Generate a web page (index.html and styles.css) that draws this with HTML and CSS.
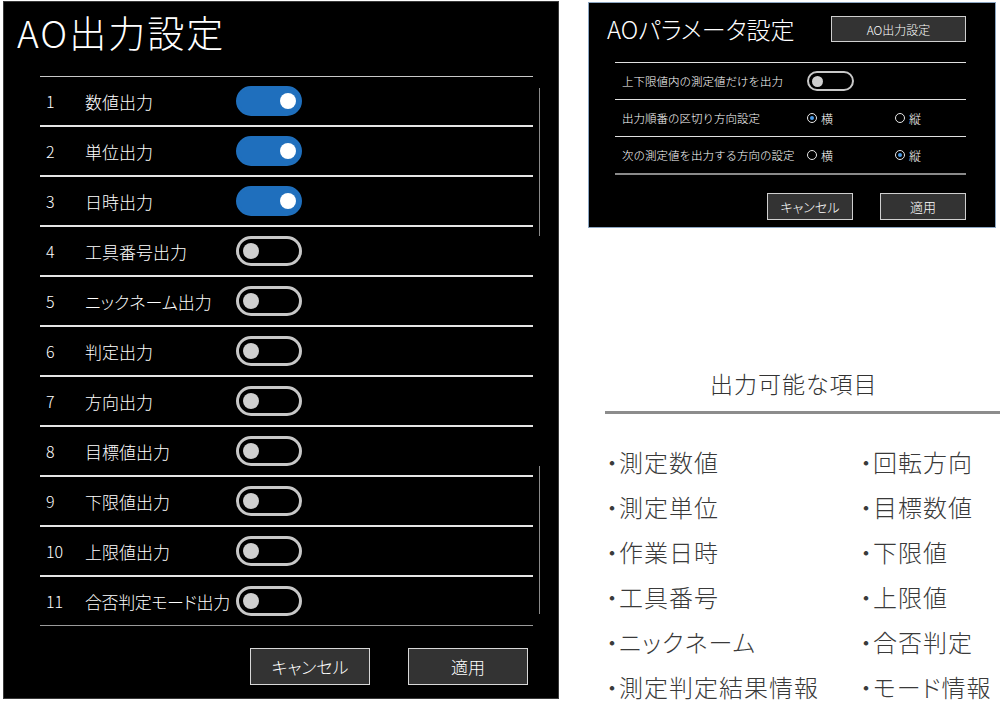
FILE: index.html
```html
<!DOCTYPE html>
<html lang="ja">
<head>
<meta charset="utf-8">
<title>AO出力設定</title>
<link rel="stylesheet" href="styles.css">
</head>
<body>
<div class="page">
  <section class="panel-main">
    <h1 class="main-title">AO出力設定</h1>
    <div class="list-wrap">
      <ul class="out-list">
        <li class="row"><span class="num">1</span><span class="label">数値出力</span><span class="toggle on"><span class="knob"></span></span></li>
        <li class="row"><span class="num">2</span><span class="label">単位出力</span><span class="toggle on"><span class="knob"></span></span></li>
        <li class="row"><span class="num">3</span><span class="label">日時出力</span><span class="toggle on"><span class="knob"></span></span></li>
        <li class="row"><span class="num">4</span><span class="label">工具番号出力</span><span class="toggle"><span class="knob"></span></span></li>
        <li class="row"><span class="num">5</span><span class="label">ニックネーム出力</span><span class="toggle"><span class="knob"></span></span></li>
        <li class="row"><span class="num">6</span><span class="label">判定出力</span><span class="toggle"><span class="knob"></span></span></li>
        <li class="row"><span class="num">7</span><span class="label">方向出力</span><span class="toggle"><span class="knob"></span></span></li>
        <li class="row"><span class="num">8</span><span class="label">目標値出力</span><span class="toggle"><span class="knob"></span></span></li>
        <li class="row"><span class="num">9</span><span class="label">下限値出力</span><span class="toggle"><span class="knob"></span></span></li>
        <li class="row"><span class="num">10</span><span class="label">上限値出力</span><span class="toggle"><span class="knob"></span></span></li>
        <li class="row"><span class="num">11</span><span class="label tight">合否判定モード出力</span><span class="toggle"><span class="knob"></span></span></li>
      </ul>
      <div class="scrollbar"><span class="seg"></span><span class="seg"></span></div>
    </div>
    <div class="actions">
      <button class="btn">キャンセル</button>
      <button class="btn">適用</button>
    </div>
  </section>

  <aside class="side">
    <section class="panel-param">
      <div class="param-head">
        <h2 class="param-title">AOパラメータ設定</h2>
        <button class="head-btn">AO出力設定</button>
      </div>
      <ul class="param-rows">
        <li class="prow"><span class="plabel">上下限値内の測定値だけを出力</span><span class="toggle small"><span class="knob"></span></span></li>
        <li class="prow"><span class="plabel">出力順番の区切り方向設定</span><span class="opt"><span class="radio on"></span>横</span><span class="opt"><span class="radio"></span>縦</span></li>
        <li class="prow"><span class="plabel">次の測定値を出力する方向の設定</span><span class="opt"><span class="radio"></span>横</span><span class="opt"><span class="radio on"></span>縦</span></li>
      </ul>
      <div class="param-actions">
        <button class="pbtn">キャンセル</button>
        <button class="pbtn">適用</button>
      </div>
    </section>

    <h2 class="avail-title">出力可能な項目</h2>
    <div class="avail-rule"></div>
    <ul class="avail-list">
      <li>・測定数値</li>
      <li>・測定単位</li>
      <li>・作業日時</li>
      <li>・工具番号</li>
      <li>・ニックネーム</li>
      <li>・測定判定結果情報</li>
      <li>・回転方向</li>
      <li>・目標数値</li>
      <li>・下限値</li>
      <li>・上限値</li>
      <li>・合否判定</li>
      <li>・モード情報</li>
    </ul>
  </aside>
</div>
</body>
</html>
```

FILE: styles.css
```css
html, body {
  margin: 0;
  padding: 0;
  background: #ffffff;
}
body {
  width: 1000px;
  height: 707px;
  overflow: hidden;
  font-family: "Noto Sans CJK JP", "Noto Sans", sans-serif;
  font-weight: 300;
}
.page {
  display: flex;
  align-items: flex-start;
  gap: 29px;
  padding: 1px 0 0 3px;
}

/* ---------- main panel ---------- */
.panel-main {
  box-sizing: border-box;
  width: 556px;
  height: 698px;
  background: #000;
  border: 1px solid #3a3a3a;
  padding-top: 10px;
  display: flex;
  flex-direction: column;
}
.main-title {
  margin: 0 0 0 13px;
  font-size: 37px;
  line-height: 40px;
  font-weight: 300;
  letter-spacing: 2px;
  color: #fff;
}
.list-wrap {
  display: flex;
  gap: 6px;
  margin: 24px 0 0 36px;
}
.out-list {
  list-style: none;
  margin: 0;
  padding: 0;
  width: 493px;
  border-top: 1px solid #c8c8c8;
}
.row {
  display: flex;
  align-items: center;
  height: 48px;
  padding-left: 6px;
  border-bottom: 2px solid #e4e4e4;
  color: #fff;
}
.row:last-child {
  border-bottom: 1px solid #9a9a9a;
}
.num {
  width: 39px;
  font-size: 16px;
}
.label {
  width: 151px;
  font-size: 17px;
  white-space: nowrap;
  font-feature-settings: "palt";
}
.label.tight {
  letter-spacing: -0.4px;
}
.toggle {
  box-sizing: border-box;
  width: 66px;
  height: 30px;
  border: 3px solid #c8c8c8;
  border-radius: 15px;
  display: flex;
  align-items: center;
  padding: 0 4px;
  flex-shrink: 0;
}
.toggle .knob {
  width: 16px;
  height: 16px;
  border-radius: 50%;
  background: #cfcfcf;
}
.toggle.on {
  background: #1f6fbd;
  border-color: #1f6fbd;
  justify-content: flex-end;
  padding: 0 3px;
}
.toggle.on .knob {
  background: #fff;
}
.scrollbar {
  display: flex;
  flex-direction: column;
  gap: 230px;
  padding-top: 12px;
}
.seg {
  display: block;
  width: 1px;
  height: 148px;
  background: #8a8a8a;
}
.actions {
  display: flex;
  justify-content: flex-end;
  gap: 38px;
  margin-top: 22px;
  padding-right: 30px;
}
.btn {
  box-sizing: border-box;
  width: 120px;
  height: 37px;
  background: #333;
  border: 1px solid #d8d8d8;
  color: #fff;
  font-family: inherit;
  font-weight: 300;
  font-size: 17px;
  padding: 0;
  font-feature-settings: "palt";
}

/* ---------- side ---------- */
.side {
  width: 412px;
  display: flex;
  flex-direction: column;
  margin-top: 1px;
}
.panel-param {
  box-sizing: border-box;
  width: 408px;
  height: 226px;
  background: #000;
  border: 1px solid #8ca6c2;
  padding: 11px 29px 0 26px;
}
.param-head {
  display: flex;
  align-items: center;
  justify-content: space-between;
  height: 30px;
  margin-left: -8px;
}
.param-title {
  margin: 0;
  font-size: 24px;
  line-height: 30px;
  font-weight: 300;
  color: #fff;
  font-feature-settings: "palt";
}
.head-btn {
  box-sizing: border-box;
  width: 135px;
  height: 26px;
  background: #333;
  border: 1px solid #cfcfcf;
  color: #fff;
  font-family: inherit;
  font-weight: 300;
  font-size: 12px;
  padding: 0;
}
.param-rows {
  list-style: none;
  margin: 18px 0 0 0;
  padding: 0;
  border-top: 1px solid #e0e0e0;
}
.prow {
  display: flex;
  align-items: center;
  height: 36px;
  border-bottom: 1px solid #e0e0e0;
  font-size: 11.5px;
  color: #fff;
}
.prow:last-child {
  border-bottom: 2px solid #8a8a8a;
}
.plabel {
  box-sizing: border-box;
  flex: 0 0 192px;
  padding-left: 7px;
  white-space: nowrap;
}
.toggle.small {
  width: 47px;
  height: 20px;
  border-width: 2px;
  border-radius: 10px;
  padding: 0 3px;
}
.toggle.small .knob {
  width: 11px;
  height: 11px;
}
.opt {
  flex: 0 0 88px;
  display: flex;
  align-items: center;
  gap: 4px;
  font-size: 12px;
}
.radio {
  box-sizing: border-box;
  width: 10px;
  height: 10px;
  border: 1px solid #e8e8e8;
  border-radius: 50%;
  display: flex;
  align-items: center;
  justify-content: center;
}
.radio.on::after {
  content: "";
  width: 4px;
  height: 4px;
  border-radius: 50%;
  background: #4a9be8;
}
.param-actions {
  display: flex;
  justify-content: flex-end;
  gap: 27px;
  margin-top: 18px;
}
.pbtn {
  box-sizing: border-box;
  width: 86px;
  height: 27px;
  background: #333;
  border: 1px solid #cfcfcf;
  color: #fff;
  font-family: inherit;
  font-weight: 300;
  font-size: 13px;
  padding: 0;
  font-feature-settings: "palt";
}
.avail-title {
  margin: 140px 0 0 122px;
  font-size: 23px;
  line-height: 30px;
  font-weight: 300;
  letter-spacing: 1px;
  color: #333;
  font-feature-settings: "palt";
}
.avail-rule {
  width: 395px;
  height: 3px;
  margin: 13px 0 0 17px;
  background: #8c8c8c;
}
.avail-list {
  list-style: none;
  margin: 25px 0 0 18px;
  padding: 0;
  display: grid;
  grid-template-columns: 254px auto;
  grid-template-rows: repeat(6, 45px);
  grid-auto-flow: column;
}
.avail-list li {
  font-size: 24px;
  line-height: 45px;
  letter-spacing: 1px;
  color: #3a3a3a;
  white-space: nowrap;
  font-feature-settings: "palt";
}
```
